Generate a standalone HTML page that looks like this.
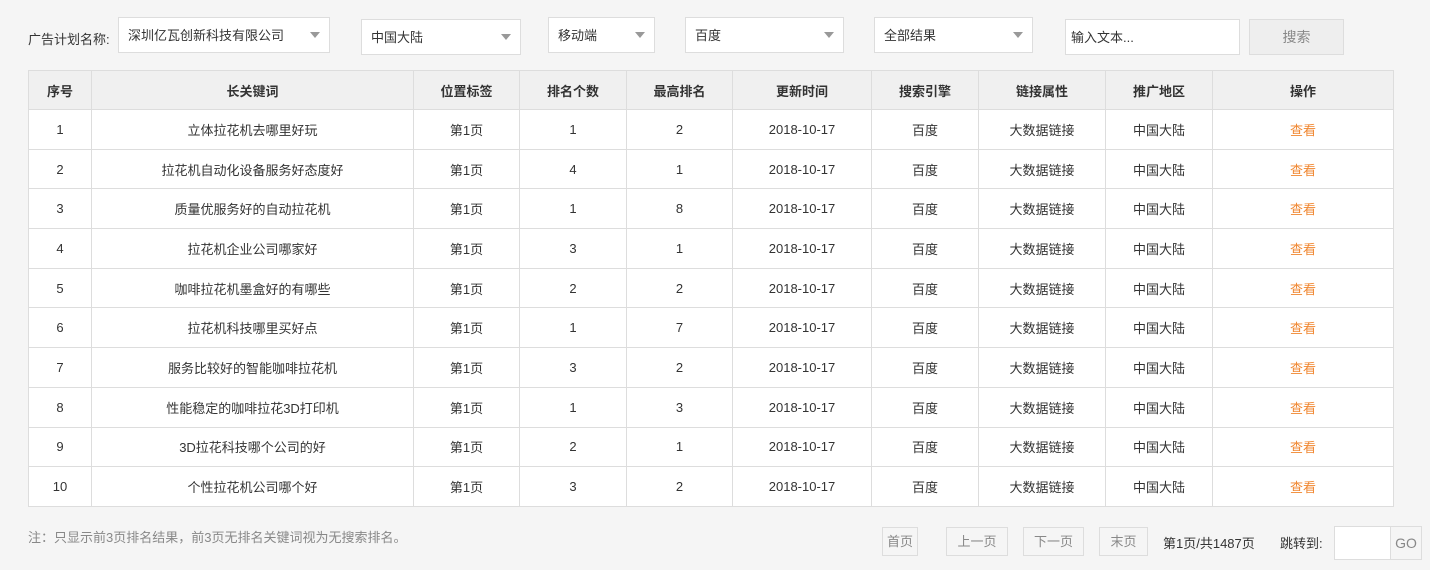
<!DOCTYPE html>
<html><head><meta charset="utf-8"><style>
*{box-sizing:border-box;margin:0;padding:0}
body{width:1430px;height:570px;background:#f5f5f5;font-family:"Liberation Sans","Noto Sans CJK SC",sans-serif;font-size:13px;color:#333;position:relative;overflow:hidden}
.a{position:absolute}
.sel{position:absolute;background:#fff;border:1px solid #ddd;padding-left:9px;line-height:36px;color:#333}
.sel:after{content:"";position:absolute;right:9px;top:14px;border-left:5px solid transparent;border-right:5px solid transparent;border-top:6px solid #999}
.sel.n:after{display:none}
table{position:absolute;left:28px;top:70px;border-collapse:collapse;background:#fff}
td,th{border:1px solid #ddd;text-align:center;height:39.7px;padding:0;font-weight:normal}
th{background:#f0f0f0;height:39px;font-weight:bold;color:#333}
.o{color:#f0862f}
.btn{position:absolute;border:1px solid #ddd;background:#f5f5f5;color:#888;text-align:center;line-height:27px;top:527px;height:29px}
</style></head><body>
<div class="a" style="left:28px;top:29px">广告计划名称:</div>
<div class="sel" style="left:118px;top:17px;width:212px;height:36px">深圳亿瓦创新科技有限公司</div>
<div class="sel" style="left:361px;top:19px;width:160px;height:36px">中国大陆</div>
<div class="sel" style="left:548px;top:17px;width:107px;height:36px">移动端</div>
<div class="sel" style="left:685px;top:17px;width:159px;height:36px">百度</div>
<div class="sel" style="left:874px;top:17px;width:159px;height:36px">全部结果</div>
<div class="sel n" style="left:1065px;top:19px;width:175px;height:36px;padding-left:5px">输入文本...</div>
<div class="a" style="left:1249px;top:19px;width:95px;height:36px;border:1px solid #ddd;background:#eee;color:#888;text-align:center;line-height:34px;font-size:14px">搜索</div>
<table>
<tr><th style="width:63px">序号</th><th style="width:322px">长关键词</th><th style="width:106px">位置标签</th><th style="width:107px">排名个数</th><th style="width:106px">最高排名</th><th style="width:139px">更新时间</th><th style="width:107px">搜索引擎</th><th style="width:127px">链接属性</th><th style="width:107px">推广地区</th><th style="width:181px">操作</th></tr>
<tr><td>1</td><td>立体拉花机去哪里好玩</td><td>第1页</td><td>1</td><td>2</td><td>2018-10-17</td><td>百度</td><td>大数据链接</td><td>中国大陆</td><td class="o">查看</td></tr>
<tr><td>2</td><td>拉花机自动化设备服务好态度好</td><td>第1页</td><td>4</td><td>1</td><td>2018-10-17</td><td>百度</td><td>大数据链接</td><td>中国大陆</td><td class="o">查看</td></tr>
<tr><td>3</td><td>质量优服务好的自动拉花机</td><td>第1页</td><td>1</td><td>8</td><td>2018-10-17</td><td>百度</td><td>大数据链接</td><td>中国大陆</td><td class="o">查看</td></tr>
<tr><td>4</td><td>拉花机企业公司哪家好</td><td>第1页</td><td>3</td><td>1</td><td>2018-10-17</td><td>百度</td><td>大数据链接</td><td>中国大陆</td><td class="o">查看</td></tr>
<tr><td>5</td><td>咖啡拉花机墨盒好的有哪些</td><td>第1页</td><td>2</td><td>2</td><td>2018-10-17</td><td>百度</td><td>大数据链接</td><td>中国大陆</td><td class="o">查看</td></tr>
<tr><td>6</td><td>拉花机科技哪里买好点</td><td>第1页</td><td>1</td><td>7</td><td>2018-10-17</td><td>百度</td><td>大数据链接</td><td>中国大陆</td><td class="o">查看</td></tr>
<tr><td>7</td><td>服务比较好的智能咖啡拉花机</td><td>第1页</td><td>3</td><td>2</td><td>2018-10-17</td><td>百度</td><td>大数据链接</td><td>中国大陆</td><td class="o">查看</td></tr>
<tr><td>8</td><td>性能稳定的咖啡拉花3D打印机</td><td>第1页</td><td>1</td><td>3</td><td>2018-10-17</td><td>百度</td><td>大数据链接</td><td>中国大陆</td><td class="o">查看</td></tr>
<tr><td>9</td><td>3D拉花科技哪个公司的好</td><td>第1页</td><td>2</td><td>1</td><td>2018-10-17</td><td>百度</td><td>大数据链接</td><td>中国大陆</td><td class="o">查看</td></tr>
<tr><td>10</td><td>个性拉花机公司哪个好</td><td>第1页</td><td>3</td><td>2</td><td>2018-10-17</td><td>百度</td><td>大数据链接</td><td>中国大陆</td><td class="o">查看</td></tr>
</table>
<div class="a" style="left:28px;top:527px;color:#888">注：只显示前3页排名结果，前3页无排名关键词视为无搜索排名。</div>
<div class="btn" style="left:882px;width:36px">首页</div>
<div class="btn" style="left:946px;width:62px">上一页</div>
<div class="btn" style="left:1023px;width:61px">下一页</div>
<div class="btn" style="left:1099px;width:49px">末页</div>
<div class="a" style="left:1163px;top:533px;color:#333">第1页/共1487页</div>
<div class="a" style="left:1280px;top:533px;color:#333">跳转到:</div>
<div class="a" style="left:1334px;top:526px;width:57px;height:34px;background:#fff;border:1px solid #ddd"></div>
<div class="a" style="left:1390px;top:526px;width:32px;height:34px;background:#f5f5f5;border:1px solid #ddd;color:#888;text-align:center;line-height:32px;font-size:14px">GO</div>
</body></html>
